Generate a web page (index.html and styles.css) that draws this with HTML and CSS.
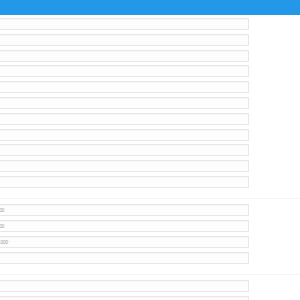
FILE: index.html
```html
<!DOCTYPE html>
<html lang="en">

<head>
  <meta charset="UTF-8">
  <meta name="viewport" content="width=device-width, initial-scale=1.0">
  <title>Settings</title>
  <link rel="stylesheet" href="styles.css">
</head>

<body>
  <div class="topbar"></div>

  <div class="group first">
    <input class="field" type="text">
    <input class="field" type="text">
    <input class="field" type="text">
    <input class="field" type="text">
    <input class="field" type="text">
    <input class="field" type="text">
    <input class="field" type="text">
    <input class="field" type="text">
    <input class="field" type="text">
    <input class="field" type="text">
    <input class="field" type="text">
  </div>

  <div class="group">
    <input class="field" type="text" value="100">
    <input class="field" type="text" value="200">
    <input class="field" type="text" value="1,000">
    <input class="field" type="text">
  </div>

  <div class="group">
    <input class="field" type="text">
    <input class="field" type="text">
  </div>
</body>
</html>
```

FILE: styles.css
```css
*,
*::before,
*::after {
	box-sizing: border-box;
}

body {
	margin: 0;
	padding: 0;
	background: #fff;
	font-family: 'Liberation Sans', Arial, sans-serif;
	overflow: hidden;
}

.topbar {
	height: 15px;
	background: #2398e9;
}

.group {
	display: flex;
	flex-direction: column;
	gap: 3.8px;
	padding: 5px 0 10.5px;
	border-bottom: 1px solid #f4f4f4;
}

.group.first {
	padding-top: 3px;
}

.field {
	display: block;
	width: 269px;
	height: 12px;
	margin: 0 0 0 -20px;
	padding: 0 0 0 15.6px;
	border: 1px solid #e8e8e8;
	border-radius: 0;
	background: #fdfdfd;
	box-shadow: inset 0 1px 1px rgba(0, 0, 0, 0.03);
	font-family: 'Liberation Sans', Arial, sans-serif;
	font-size: 4.6px;
	color: #999;
	outline: none;
}
```
